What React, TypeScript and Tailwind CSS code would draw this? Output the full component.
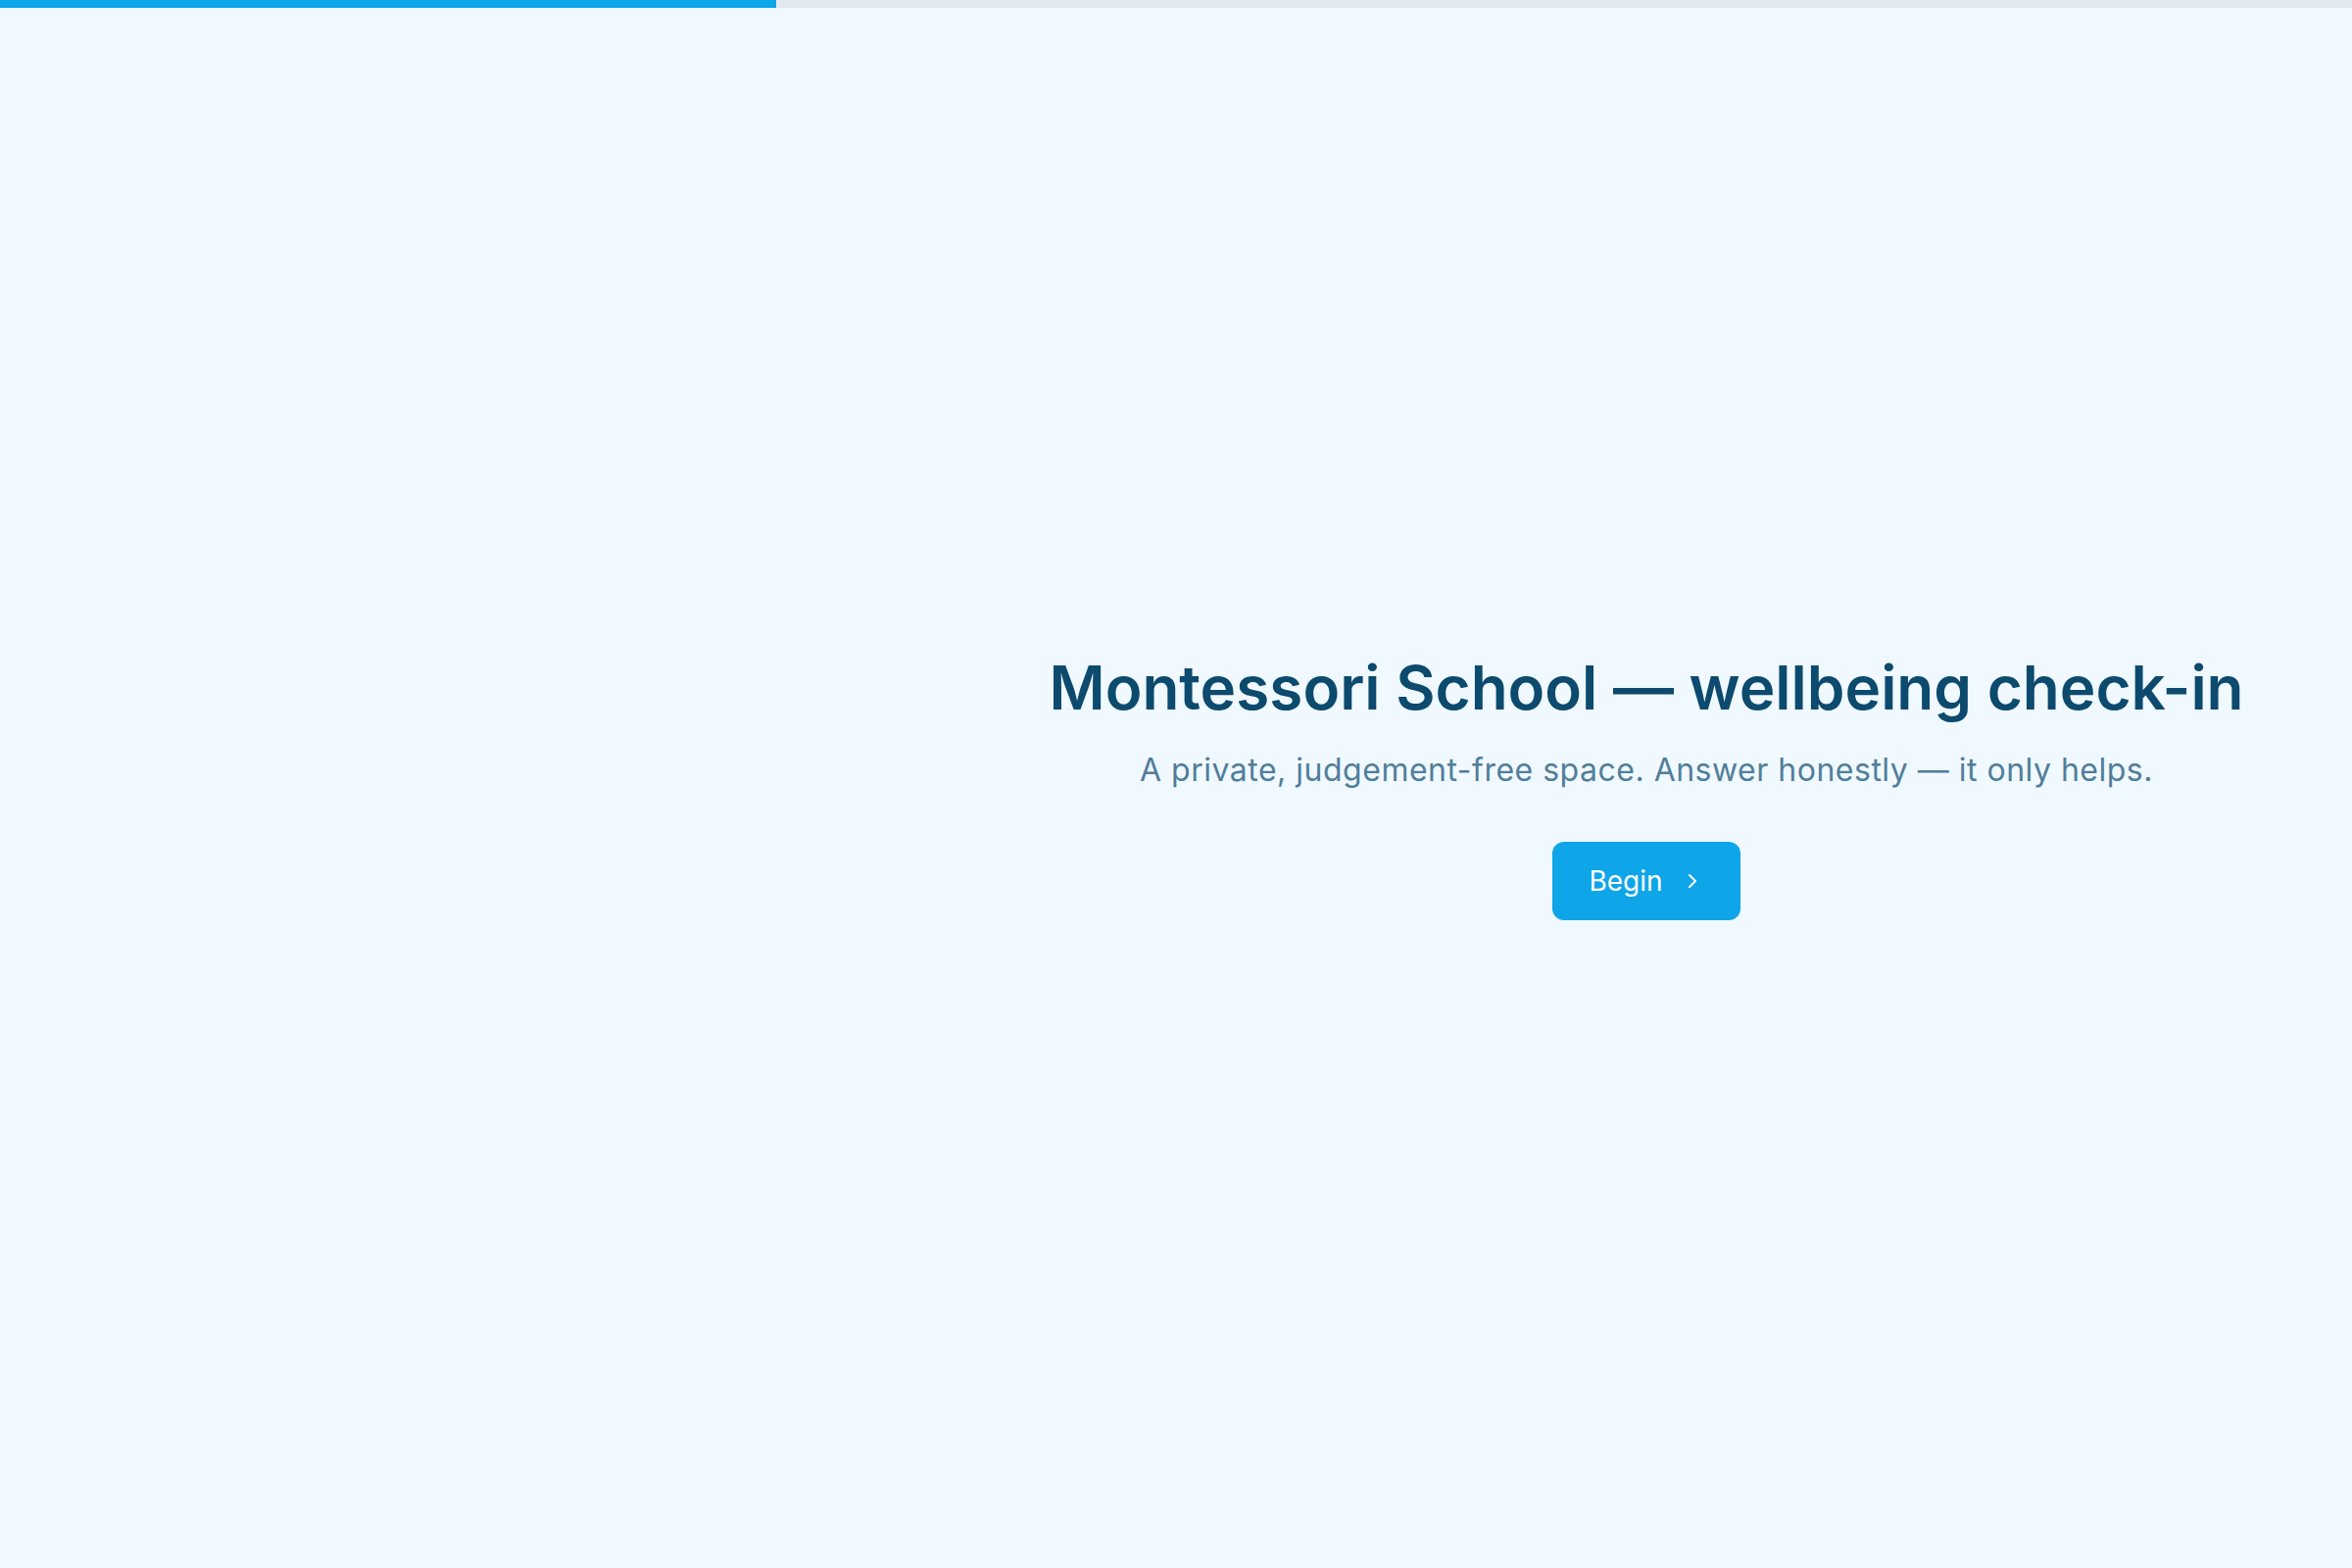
import { ChevronRight } from 'lucide-react';

const PROGRESS = 33;

export default function App() {
  return (
    <div className="flex h-[1600px] flex-col bg-[#f0f9ff] font-['Inter',sans-serif]">
      <div className="h-[8px] w-full shrink-0 bg-[#e2e8f0]">
        <div className="h-full bg-[#0ea5e9]" style={{ width: `${PROGRESS}%` }} />
      </div>
      <div className="flex min-h-0 flex-1">
        <div className="w-[960px] shrink-0" />
        <main className="flex flex-1 flex-col items-center justify-center pb-[4px] text-center">
          <h1 className="text-[62px] leading-[1.2] font-semibold text-[#0c4a6e]">
            Montessori School — wellbeing check-in
          </h1>
          <p className="mt-[25px] text-[32px] leading-[1.4] tracking-[0.5px] text-[#507e9a]">
            A private, judgement-free space. Answer honestly — it only helps.
          </p>
          <button
            type="button"
            className="mt-[50px] flex h-[80px] w-[192px] items-center justify-center gap-[18px] rounded-[12px] bg-[#0ea5e9] text-[28px] text-white"
          >
            Begin
            <ChevronRight size={24} strokeWidth={2} />
          </button>
        </main>
      </div>
    </div>
  );
}
